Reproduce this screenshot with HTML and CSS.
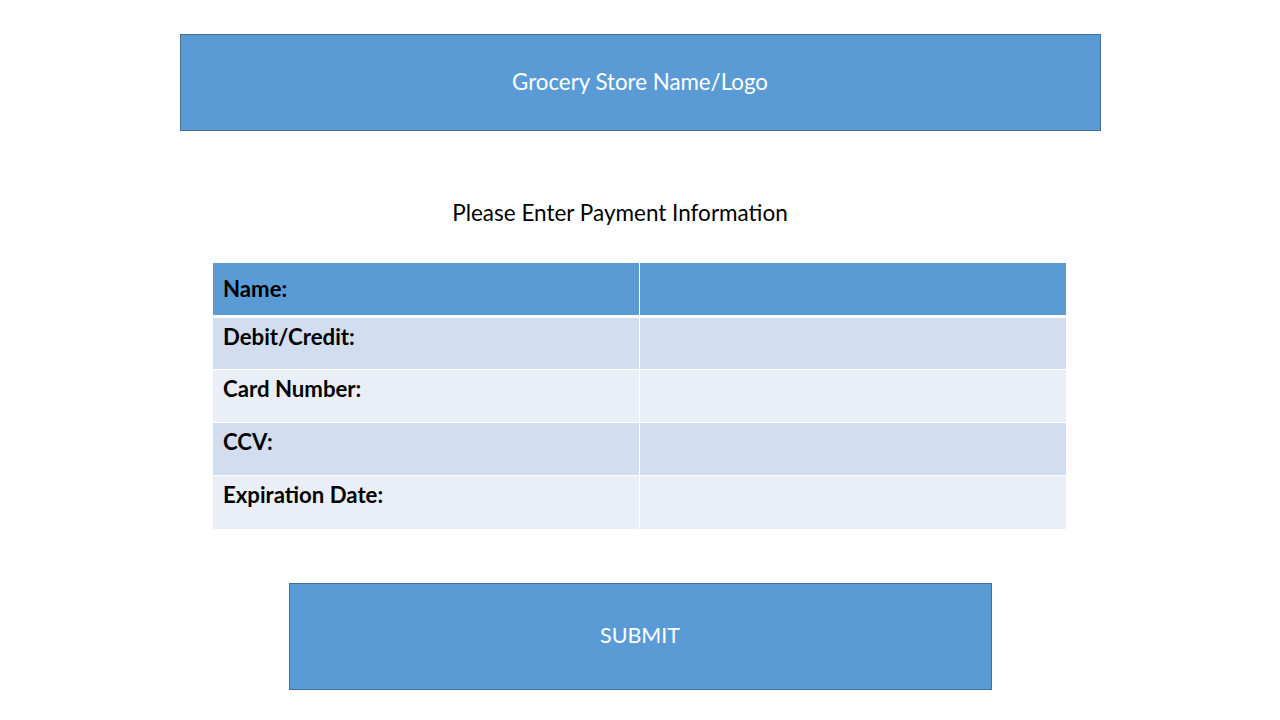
FILE: index.html
```html
<!DOCTYPE html>
<html lang="en">
<head>
<meta charset="utf-8">
<title>Payment</title>
<link rel="stylesheet" href="styles.css">
</head>
<body>
<div class="slide">
  <header class="banner">Grocery Store Name/Logo</header>
  <h1 class="title">Please Enter Payment Information</h1>
  <div class="form-table">
    <div class="cell head label">Name:</div>
    <div class="cell head"></div>
    <div class="cell odd label">Debit/Credit:</div>
    <div class="cell odd"></div>
    <div class="cell even label">Card Number:</div>
    <div class="cell even"></div>
    <div class="cell odd label">CCV:</div>
    <div class="cell odd"></div>
    <div class="cell even label">Expiration Date:</div>
    <div class="cell even"></div>
  </div>
  <button class="submit" type="button">SUBMIT</button>
</div>
</body>
</html>
```

FILE: styles.css
```css
html, body {
  margin: 0;
  padding: 0;
  background: #ffffff;
}

body {
  font-family: "Lato", "Open Sans", "Liberation Sans", sans-serif;
  color: #000;
}

.slide {
  width: 1280px;
  height: 720px;
  display: flex;
  flex-direction: column;
  align-items: center;
  overflow: hidden;
}

.banner {
  box-sizing: border-box;
  width: 921px;
  height: 97px;
  margin-top: 34px;
  background: #5b9bd5;
  border: 1px solid #41719c;
  color: #fff;
  font-size: 22.3px;
  display: flex;
  align-items: center;
  justify-content: center;
  padding-bottom: 3px;
}

.title {
  margin: 69px 0 0 0;
  padding-right: 40px;
  font-size: 22.5px;
  font-weight: normal;
  line-height: 26px;
}

.form-table {
  align-self: flex-start;
  margin-top: 37px;
  margin-left: 213px;
  width: 853px;
  display: grid;
  grid-template-columns: 426px 426px;
  grid-template-rows: 54px 51px 52px 52px 53px;
  column-gap: 1px;
  row-gap: 1px;
  background: #fff;
}

.cell {
  box-sizing: border-box;
  padding: 6px 10px;
  font-size: 22.2px;
  font-weight: bold;
  line-height: 26px;
}

.cell.head {
  background: #5b9bd5;
  display: flex;
  align-items: center;
  margin-bottom: 2px;
  padding-top: 0;
  padding-bottom: 0;
}

.cell.odd {
  background: #d2deef;
}

.cell.even {
  background: #eaeff7;
}

.submit {
  box-sizing: border-box;
  width: 703px;
  height: 107px;
  margin-top: 54px;
  background: #5b9bd5;
  border: 1px solid #41719c;
  border-radius: 0;
  color: #fff;
  font-family: inherit;
  font-size: 21.5px;
  padding: 0 0 4px 0;
  cursor: pointer;
}
```
